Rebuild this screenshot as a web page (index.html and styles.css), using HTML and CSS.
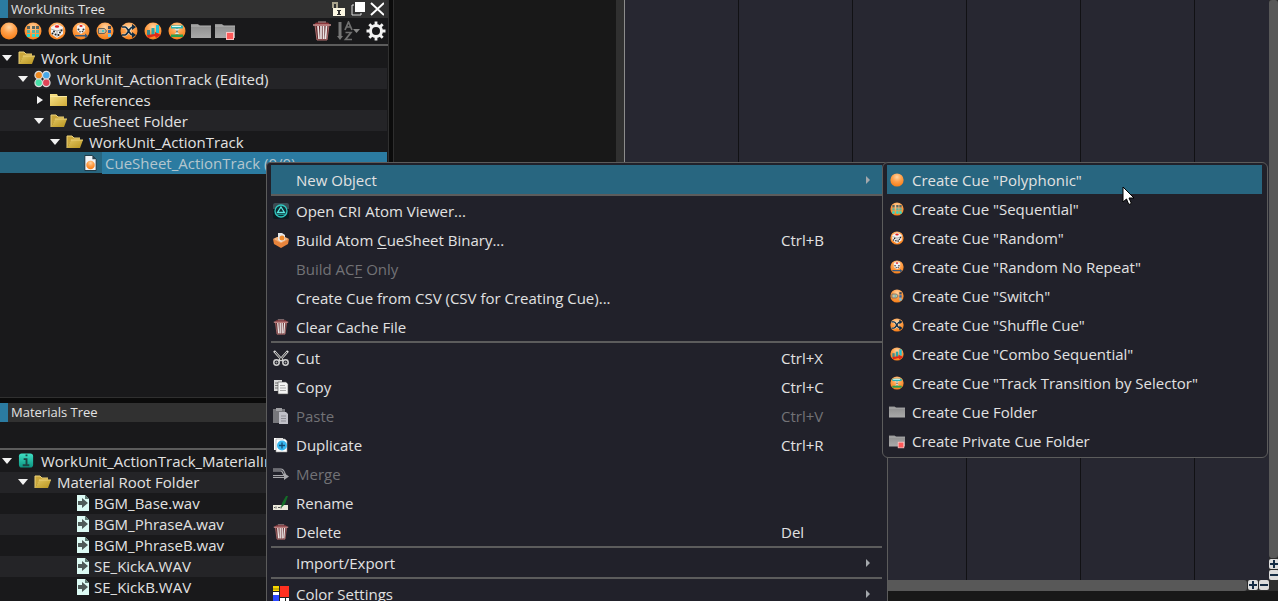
FILE: index.html
```html
<!DOCTYPE html>
<html lang="en">
<head>
    <meta charset="UTF-8">
    <meta name="viewport" content="width=device-width, initial-scale=1.0">
    <title>WorkUnits Tree</title>
    <link rel="stylesheet" href="styles.css">
</head>
<body>
    <!-- shared icons -->
    <svg class="sprite" aria-hidden="true">
        <defs>
            <radialGradient id="gOrange" cx="50%" cy="28%" r="70%">
                <stop offset="0" stop-color="#ffd5a4"/>
                <stop offset="0.5" stop-color="#ffa04a"/>
                <stop offset="1" stop-color="#f8801a"/>
            </radialGradient>
            <linearGradient id="gGray" x1="0" y1="0" x2="0" y2="1">
                <stop offset="0" stop-color="#8c8c8c"/>
                <stop offset="1" stop-color="#aaaaaa"/>
            </linearGradient>
            <linearGradient id="gFolder" x1="0" y1="0" x2="1" y2="1">
                <stop offset="0" stop-color="#fbe58c"/>
                <stop offset="1" stop-color="#d0ab38"/>
            </linearGradient>
            <linearGradient id="gOpen" x1="0" y1="0" x2="1" y2="1">
                <stop offset="0" stop-color="#e2c660"/>
                <stop offset="1" stop-color="#b8941f"/>
            </linearGradient>
            <linearGradient id="gTeal" x1="0" y1="0" x2="0" y2="1">
                <stop offset="0" stop-color="#3fe0c4"/>
                <stop offset="1" stop-color="#0b9480"/>
            </linearGradient>
        </defs>
        <symbol id="ball" viewBox="0 0 18 18"><circle cx="9" cy="9" r="8.5" fill="url(#gOrange)"/></symbol>
        <symbol id="seq" viewBox="0 0 18 18">
            <circle cx="9" cy="9" r="8.5" fill="url(#gOrange)"/>
            <path d="M3 4h3v3H3zM8 4h3v3H8zM12 4h3v3h-3z" fill="#5a6660"/>
            <path d="M3 8h3v3H3zM8 8h3v3H8zM12 8h3v3h-3z" fill="#58b4a4"/>
            <path d="M3 12h3v3H3zM8 12h3v3H8zM12 12h3v3h-3z" fill="#28dccc"/>
        </symbol>
        <symbol id="random" viewBox="0 0 18 18">
            <circle cx="9" cy="9" r="8.5" fill="url(#gOrange)"/>
            <path d="M3 5l6-3 6 3v7l-6 4-6-4z" fill="#f2f2f2"/>
            <path d="M3 7l6 2 6-2M9 9v6" stroke="#aaa" fill="none"/>
            <ellipse cx="9" cy="4.500" rx="2.2" ry="1.3" fill="#e02020"/>
            <g fill="#222"><circle cx="4.500" cy="11.500" r="1"/><circle cx="6" cy="9.500" r="1"/><circle cx="7.500" cy="12.500" r="1"/><circle cx="10.500" cy="13" r="1"/><circle cx="12" cy="10.500" r="1"/><circle cx="13.500" cy="8.500" r="1"/></g>
        </symbol>
        <symbol id="norepeat" viewBox="0 0 18 18">
            <circle cx="9" cy="9" r="8.5" fill="url(#gOrange)"/>
            <path d="M5 4l4-2 4 2v5l-4 3-4-3z" fill="#f2f2f2"/>
            <ellipse cx="9" cy="4" rx="1.6" ry="1" fill="#e02020"/>
            <g fill="#333"><circle cx="6.5" cy="7.500" r="1"/><circle cx="8" cy="9.800" r=".8"/><circle cx="11.5" cy="7.500" r="1"/><circle cx="10.500" cy="9.500" r=".8"/></g>
            <path d="M3 13h10v-1.500l3 2.500-3 2v-1.500H3z" fill="#365a80"/>
        </symbol>
        <symbol id="switch" viewBox="0 0 18 18">
            <circle cx="9" cy="9" r="8.5" fill="url(#gOrange)"/>
            <path d="M2.500 6.500h6l2 2.500-2 2.500h-6z" fill="#c8bea4" stroke="#6c6458"/>
            <path d="M6 8h2v2H6z" fill="#50c8c0"/>
            <path d="M12 4h3v3h-3z" fill="#444c58"/>
            <path d="M12 8h3v3h-3z" fill="#2c66b0"/>
            <path d="M12 12h3v3h-3z" fill="#68c4f0"/>
        </symbol>
        <symbol id="shuffle" viewBox="0 0 18 18">
            <circle cx="9" cy="9" r="8.5" fill="url(#gOrange)"/>
            <path d="M2 5h3c3 0 4 8 8 8M2 13h3c3 0 4-8 8-8" stroke="#dff3f8" stroke-width="3" fill="none" opacity=".6"/>
            <path d="M2 5h3c3 0 4 8 8 8M2 13h3c3 0 4-8 8-8" stroke="#102c44" stroke-width="1.7" fill="none"/>
            <path d="M12 2l4 3-4 3zM12 10l4 3-4 3z" fill="#102c44"/>
        </symbol>
        <symbol id="combo" viewBox="0 0 18 18">
            <circle cx="9" cy="9" r="8.5" fill="url(#gOrange)"/>
            <path d="M3 8h3v5H3z" fill="#3b8c90"/>
            <path d="M7.500 6h3v7h-3z" fill="#2ca6a6"/>
            <path d="M12 3h3v8h-3z" fill="#20c4d8"/>
            <path d="M3 13l8-1v-2l6 3-5 3-1-2-7 2z" fill="#e02818"/>
        </symbol>
        <symbol id="trans" viewBox="0 0 18 18">
            <circle cx="9" cy="9" r="8.5" fill="url(#gOrange)"/>
            <path d="M3 3.500h12v3H3z" fill="#28b4b4"/>
            <path d="M3 12.500h12v2.500H3z" fill="#28a050"/>
            <path d="M4 4.500h9" stroke="#d8fff8"/>
            <path d="M9 6.500v6" stroke="#4c7478" stroke-width="1.500"/>
            <path d="M6.500 7h5L9 9zM6.500 12h5L9 10z" fill="#d8ece8"/>
        </symbol>
        <symbol id="gfolder" viewBox="0 0 20 18">
            <path d="M0 2h7l2 2h11v12H0z" fill="url(#gGray)"/>
            <path d="M0 4h20" stroke="#b6b6b6"/>
        </symbol>
        <symbol id="pfolder" viewBox="0 0 20 18">
            <path d="M0 2h7l2 2h11v12H0z" fill="url(#gGray)"/>
            <path d="M0 4h20" stroke="#b6b6b6"/>
            <rect x="11.500" y="10.500" width="7" height="7" fill="#ff5a5a" stroke="#ffc4c4"/>
        </symbol>
        <symbol id="trash" viewBox="0 0 20 20">
            <path d="M3 4h14l-2 15H5z" fill="#642b2e" stroke="#b07070"/>
            <path d="M6 5l1 13M9 5v13M11.500 5v13M14.500 5l-1 13" stroke="#ece6e6" stroke-width="1.700"/>
            <path d="M4 1.500h12l2 2H2z" fill="#8c3438"/>
            <path d="M1 4h18" stroke="#c88c8c" stroke-width="1.500"/>
            <path d="M6 1h8" stroke="#c09a9a"/>
        </symbol>
        <symbol id="yopen" viewBox="0 0 17 14">
            <path d="M1 1h5l2 2h6v3H5L1 13z" fill="#c9a63c"/>
            <path d="M5 5h12l-3 8H1z" fill="url(#gOpen)"/>
            <path d="M1 13V1h5l2 2h6M5 5h12" stroke="#ecd27a" fill="none"/>
        </symbol>
        <symbol id="yclosed" viewBox="0 0 17 14">
            <path d="M0 1h7l1 2h9v10H0z" fill="url(#gFolder)"/>
            <path d="M0 3.500h17" stroke="#fbe9a0"/>
        </symbol>
        <symbol id="wav" viewBox="0 0 12 16">
            <path d="M0 0h8l4 4v12H0z" fill="#dcfaf4"/>
            <path d="M8 0v4h4z" fill="#5c7a72"/>
            <path d="M1 6h4V3l6 5-6 5v-3H1z" fill="#4f5a58"/>
        </symbol>
    </svg>

    <main class="app">
        <div class="dock">
            <section class="panel panel-work">
                <header class="titlebar">
                    <h2>WorkUnits Tree</h2>
                    <button aria-label="Unlock"><svg width="14" height="16" viewBox="0 0 14 16"><path d="M1 7V2h4v5" fill="none" stroke="#a8a28c" stroke-width="2"/><path d="M1 7h12v8H1z" fill="#fdf8e4"/><path d="M5 9h4v1H8v3h1v1H5v-1h1v-3H5z" fill="#333"/></svg></button>
                    <button aria-label="Float"><svg width="14" height="16" viewBox="0 0 14 16"><path d="M3 4H1v10h9v-2" fill="none" stroke="#ddd"/><path d="M4 1h10v10H4z" fill="#fff"/></svg></button>
                    <button aria-label="Close"><svg width="14" height="16" viewBox="0 0 14 16"><path d="M1 2l13 12M14 2L1 14" stroke="#fff" stroke-width="2"/></svg></button>
                </header>
                <div class="toolbar">
                    <button aria-label="Polyphonic"><svg class="ic18"><use href="#ball"/></svg></button>
                    <button aria-label="Sequential"><svg class="ic18"><use href="#seq"/></svg></button>
                    <button aria-label="Random"><svg class="ic18"><use href="#random"/></svg></button>
                    <button aria-label="Random No Repeat"><svg class="ic18"><use href="#norepeat"/></svg></button>
                    <button aria-label="Switch"><svg class="ic18"><use href="#switch"/></svg></button>
                    <button aria-label="Shuffle"><svg class="ic18"><use href="#shuffle"/></svg></button>
                    <button aria-label="Combo Sequential"><svg class="ic18"><use href="#combo"/></svg></button>
                    <button aria-label="Track Transition"><svg class="ic18"><use href="#trans"/></svg></button>
                    <button aria-label="Folder"><svg class="ic20"><use href="#gfolder"/></svg></button>
                    <button aria-label="Private Folder"><svg class="ic20"><use href="#pfolder"/></svg></button>
                    <button class="push" aria-label="Delete"><svg class="ic20"><use href="#trash"/></svg></button>
                    <button aria-label="Sort"><svg width="23" height="20" viewBox="0 0 23 20"><path d="M3 1v15" stroke="#777" stroke-width="3"/><path d="M0 15h6l-3 4z" fill="#777"/><path d="M8 9l3.500-8L15 9M9 6h5M8.500 11.500H14L8.500 18.500H15" fill="none" stroke="#707070" stroke-width="1.700"/><path d="M16 8h7l-3.500 4z" fill="#888"/></svg></button>
                    <button aria-label="Settings"><svg width="20" height="20" viewBox="0 0 20 20"><circle cx="10" cy="10" r="5.500" fill="none" stroke="#f2f2f2" stroke-width="3"/><path d="M10 0.500v4M10 15.500v4M0.500 10h4M15.500 10h4M3.300 3.300l2.800 2.800M13.900 13.900l2.800 2.800M3.300 16.700l2.800-2.800M13.900 6.100l2.800-2.800" stroke="#f2f2f2" stroke-width="2.800"/></svg></button>
                </div>
                <ul class="tree">
                    <li class="row d0"><span class="tw open"></span><svg class="fi"><use href="#yopen"/></svg>Work Unit</li>
                    <li class="row d1"><span class="tw open"></span><svg class="fi big" viewBox="0 0 18 18"><g stroke="#dcdcdc" stroke-width="1.300"><circle cx="5" cy="5" r="4" fill="#f08a20"/><circle cx="13" cy="5" r="4" fill="#48a8e8"/><circle cx="5" cy="13" r="4" fill="#48e0a8"/><circle cx="13" cy="13" r="4" fill="#e04458"/></g></svg>WorkUnit_ActionTrack (Edited)</li>
                    <li class="row d2"><span class="tw"></span><svg class="fi"><use href="#yclosed"/></svg>References</li>
                    <li class="row d2"><span class="tw open"></span><svg class="fi"><use href="#yopen"/></svg>CueSheet Folder</li>
                    <li class="row d3"><span class="tw open"></span><svg class="fi"><use href="#yopen"/></svg>WorkUnit_ActionTrack</li>
                    <li class="row selected"><svg class="fi big" viewBox="0 0 18 18"><path d="M3 1h8l4 4v12H3z" fill="#f0f4f8" stroke="#16303c"/><path d="M11 1v4h4z" fill="#2c4450"/><circle cx="9" cy="11" r="4.500" fill="url(#gOrange)"/></svg><span class="sel-text">CueSheet_ActionTrack (0/0)</span></li>
                </ul>
            </section>
            <section class="panel">
                <header class="titlebar lower"><h2>Materials Tree</h2></header>
                <div class="toolbar"></div>
                <ul class="tree">
                    <li class="row d0"><span class="tw open"></span><svg class="fi big" viewBox="0 0 18 18"><rect x="1" y="1" width="15" height="15" rx="3" fill="url(#gTeal)"/><path d="M8 3h2M6 7h3v6M5 13.500h7" stroke="#1c4444" stroke-width="2" fill="none"/></svg>WorkUnit_ActionTrack_MaterialInfo</li>
                    <li class="row d1"><span class="tw open"></span><svg class="fi"><use href="#yopen"/></svg>Material Root Folder</li>
                    <li class="row file"><svg class="wi"><use href="#wav"/></svg>BGM_Base.wav</li>
                    <li class="row file"><svg class="wi"><use href="#wav"/></svg>BGM_PhraseA.wav</li>
                    <li class="row file"><svg class="wi"><use href="#wav"/></svg>BGM_PhraseB.wav</li>
                    <li class="row file"><svg class="wi"><use href="#wav"/></svg>SE_KickA.WAV</li>
                    <li class="row file"><svg class="wi"><use href="#wav"/></svg>SE_KickB.WAV</li>
                </ul>
            </section>
        </div>
        <div class="tracks"></div>
        <div class="timeline">
            <div class="grid"></div>
            <div class="vbar">
                <div class="thumb"></div>
                <button class="zoom-btn" aria-label="Zoom in vertically"><svg width="10" height="10" viewBox="0 0 10 10"><path d="M1 5h8M5 1v8" stroke="#142c44" stroke-width="2"/></svg></button>
                <button class="zoom-btn" aria-label="Zoom out vertically"><svg width="10" height="10" viewBox="0 0 10 10"><path d="M1 5h8" stroke="#142c44" stroke-width="2"/></svg></button>
            </div>
            <div class="hbar">
                <div class="thumb"></div>
                <button class="zoom-btn" aria-label="Zoom in"><svg width="10" height="10" viewBox="0 0 10 10"><path d="M1 5h8M5 1v8" stroke="#142c44" stroke-width="2"/></svg></button>
                <button class="zoom-btn" aria-label="Zoom out"><svg width="10" height="10" viewBox="0 0 10 10"><path d="M1 5h8" stroke="#142c44" stroke-width="2"/></svg></button>
            </div>
            <div class="corner"></div>
        </div>
    </main>

    <ul class="menu context">
        <li class="has-sub">
            <button class="item active"><span></span><span>New Object</span><span></span><i class="arrow"></i></button>
            <ul class="menu submenu">
                <li><button class="item active"><svg class="mi"><use href="#ball"/></svg><span>Create Cue "Polyphonic"</span></button></li>
                <li><button class="item"><svg class="mi"><use href="#seq"/></svg><span>Create Cue "Sequential"</span></button></li>
                <li><button class="item"><svg class="mi"><use href="#random"/></svg><span>Create Cue "Random"</span></button></li>
                <li><button class="item"><svg class="mi"><use href="#norepeat"/></svg><span>Create Cue "Random No Repeat"</span></button></li>
                <li><button class="item"><svg class="mi"><use href="#switch"/></svg><span>Create Cue "Switch"</span></button></li>
                <li><button class="item"><svg class="mi"><use href="#shuffle"/></svg><span>Create Cue "Shuffle Cue"</span></button></li>
                <li><button class="item"><svg class="mi"><use href="#combo"/></svg><span>Create Cue "Combo Sequential"</span></button></li>
                <li><button class="item"><svg class="mi"><use href="#trans"/></svg><span>Create Cue "Track Transition by Selector"</span></button></li>
                <li><button class="item"><svg class="mi wide"><use href="#gfolder"/></svg><span>Create Cue Folder</span></button></li>
                <li><button class="item"><svg class="mi wide"><use href="#pfolder"/></svg><span>Create Private Cue Folder</span></button></li>
            </ul>
        </li>
        <li class="sep"></li>
        <li><button class="item"><svg class="mi wide" viewBox="0 0 16 16"><rect width="16" height="16" rx="2" fill="#0c1a20"/><path d="M0 2q0-2 2-2h12q2 0 2 2v4H0z" fill="#3c4c54"/><circle cx="8" cy="8" r="6" fill="#0c2a30" stroke="#30c8c0" stroke-width="1.300"/><path d="M8 4l3.500 5.500h-7z" fill="none" stroke="#58e8e0" stroke-width="1.300"/><path d="M4 11.500h8" stroke="#208c88"/></svg><span>Open CRI Atom Viewer...</span></button></li>
        <li><button class="item"><svg class="mi wide" viewBox="0 0 16 16"><path d="M0 7l8 3 8-3-1 5-7 4-7-4z" fill="#e8843c"/><path d="M0 7l4-2 8 0 4 2-8 4z" fill="#f8b47c"/><path d="M5 1h4l3 2v5l-4 2-3-2z" fill="#e8e8e8"/><circle cx="9" cy="6" r="2.500" fill="#f08a2c"/></svg><span>Build Atom <u>C</u>ueSheet Binary...</span><kbd>Ctrl+B</kbd></button></li>
        <li><button class="item" disabled><span></span><span>Build AC<u>F</u> Only</span></button></li>
        <li><button class="item"><span></span><span>Create Cue from CSV (CSV for Creating Cue)...</span></button></li>
        <li><button class="item"><svg class="mi wide"><use href="#trash"/></svg><span>Clear Cache File</span></button></li>
        <li class="sep"></li>
        <li><button class="item"><svg class="mi wide" viewBox="0 0 16 16"><path d="M1 1l9 10M15 1L6 11" stroke="#d8d8d8" stroke-width="2.500"/><path d="M2 2l7 8M14 2l-7 8" stroke="#333"/><g fill="none" stroke="#d0d0d0" stroke-width="1.500"><circle cx="3.500" cy="12.500" r="2.700"/><circle cx="12.500" cy="12.500" r="2.700"/></g><g fill="#aaa"><circle cx="3.500" cy="12.500" r="1"/><circle cx="12.500" cy="12.500" r="1"/></g></svg><span>Cut</span><kbd>Ctrl+X</kbd></button></li>
        <li><button class="item"><svg class="mi wide" viewBox="0 0 16 16"><path d="M1 1h8v11H1z" fill="#d8d8d8"/><path d="M2 4h3M2 6.500h3M2 9h3" stroke="#777"/><path d="M5 3h8l2 2v10H5z" fill="#f4f4f4" stroke="#555" stroke-width=".6"/><path d="M7 6.500h5M7 9h6M7 11.500h6" stroke="#aaa"/></svg><span>Copy</span><kbd>Ctrl+C</kbd></button></li>
        <li><button class="item" disabled><svg class="mi wide" viewBox="0 0 16 16"><path d="M0 1h12v14H0z" fill="#77777c"/><path d="M3 0h6v3H3z" fill="#a0a0a4"/><path d="M6 4h7l2 2v10H6z" fill="#c0c0c8"/><path d="M8 8h5M8 10.500h5M8 13h5" stroke="#8c8c94"/></svg><span>Paste</span><kbd>Ctrl+V</kbd></button></li>
        <li><button class="item"><svg class="mi wide" viewBox="0 0 16 16"><path d="M1 1h9v12H1z" fill="#fff"/><path d="M3 2h9l2 2v11H3z" fill="#fff" stroke="#999" stroke-width=".6"/><circle cx="9" cy="8.500" r="5" fill="#38b8f0"/><path d="M9 5.500v6M6 8.500h6" stroke="#144c74" stroke-width="1.300"/></svg><span>Duplicate</span><kbd>Ctrl+R</kbd></button></li>
        <li><button class="item" disabled><svg class="mi wide" viewBox="0 0 16 16"><path d="M0 4h8c3 0 3 6 5 6M0 10.500h12" stroke="#a8a8ac" stroke-width="3" fill="none"/><path d="M0 4h8c3 0 3 6 5 6M0 10.500h12" stroke="#33333b" fill="none"/><path d="M11 7l5 3.500-5 3.500z" fill="#a8a8ac"/></svg><span>Merge</span></button></li>
        <li><button class="item"><svg class="mi wide" viewBox="0 0 16 16"><path d="M0 10h15v5H0z" fill="#eceadb"/><path d="M1 12.500h1M3 11.500v2M5 12.500h2M8 11.500v2" stroke="#555"/><path d="M8 13l1-5 4-7h2l-3 8z" fill="#146c28"/></svg><span>Rename</span></button></li>
        <li><button class="item"><svg class="mi wide"><use href="#trash"/></svg><span>Delete</span><kbd>Del</kbd></button></li>
        <li class="sep"></li>
        <li><button class="item"><span></span><span>Import/Export</span><span></span><i class="arrow"></i></button></li>
        <li class="sep"></li>
        <li><button class="item"><svg class="mi wide" viewBox="0 0 16 16"><path d="M0 0h16v16H0z" fill="#222"/><path d="M0 0h6v5H0z" fill="#f8d800"/><path d="M0 3h6" stroke="#a08800"/><path d="M7 0h9v11H7z" fill="#ff3020"/><path d="M0 6h6v3H0z" fill="#fff"/><path d="M0 9h6v7H0z" fill="#2c48ff"/><path d="M7 12h5v4H7zM13 12h3v4h-3z" fill="#fff"/></svg><span>Color Settings</span><span></span><i class="arrow"></i></button></li>
    </ul>

    <svg class="cursor" width="13" height="20" viewBox="0 0 13 20"><path d="M1 1v15l3.500-3 2.300 5.500 2.600-1.100L7 12h5z" fill="#fff" stroke="#000"/></svg>
</body>
</html>
```
FILE: styles.css
```css
* {
    box-sizing: border-box;
}
body {
    margin: 0;
    height: 100vh;
    overflow: hidden;
    background: #181818;
    color: #e2e2e2;
    font-family: "Open Sans", "Noto Sans", sans-serif;
    font-size: 15px;
    position: relative;
}
ul {
    list-style: none;
    margin: 0;
    padding: 0;
}
button {
    font: inherit;
    color: inherit;
    background: none;
    border: 0;
    padding: 0;
}
svg {
    display: block;
    flex: none;
}
.sprite {
    position: absolute;
    width: 0;
    height: 0;
}
.app {
    display: flex;
    height: 100%;
}

/* left dock */
.dock {
    flex: none;
    width: 394px;
    display: flex;
    flex-direction: column;
    background: #0b0b0b;
    border-right: 1px solid #2e2e2e;
    padding-right: 4px;
    gap: 5px;
}
.panel {
    flex: 1;
    background: #19191b;
    border-right: 1px solid #303030;
    overflow: hidden;
}
.panel-work {
    flex: 2;
    border-bottom: 1px solid #303030;
}
.titlebar {
    display: flex;
    align-items: center;
    gap: 5px;
    height: 18px;
    padding-right: 4px;
    border-left: 8px solid #2b7ba1;
    background: #313131;
}
.titlebar.lower {
    height: 19px;
}
.titlebar h2 {
    flex: 1;
    margin: 0;
    padding-left: 3px;
    font-size: 13px;
    font-weight: normal;
    line-height: 19px;
}
.toolbar {
    display: flex;
    align-items: center;
    gap: 6px;
    height: 28px;
    padding-right: 2px;
    border-bottom: 2px solid #5c5c5c;
}
.toolbar .ic20 {
    margin: 0 -1px;
}
.push {
    margin-left: auto;
}
.ic18 {
    width: 18px;
    height: 18px;
}
.ic20 {
    width: 20px;
    height: 20px;
}
.tree {
    padding: 1px 1px 0 0;
}
.row {
    display: flex;
    align-items: center;
    height: 21px;
    line-height: 22px;
    white-space: nowrap;
}
.row:nth-child(even) {
    background: #242427;
}
.d0 { padding-left: 2px; }
.d1 { padding-left: 18px; }
.d2 { padding-left: 34px; }
.d3 { padding-left: 50px; }
.file { padding-left: 77px; }
.tw {
    flex: none;
    width: 16px;
}
.tw::before {
    content: "";
    display: block;
    width: 0;
    margin-left: 3px;
    border: 4px solid transparent;
    border-left: 6px solid #f2f2f2;
    border-right: 0;
}
.tw.open::before {
    margin-left: 0;
    border: 5px solid transparent;
    border-top: 6px solid #f2f2f2;
    border-bottom: 0;
}
.fi {
    width: 17px;
    height: 14px;
    margin-right: 6px;
}
.fi.big {
    height: 18px;
}
.wi {
    width: 12px;
    height: 16px;
    margin-right: 5px;
}
.row.selected {
    padding-left: 82px;
    background: #286680;
    color: #b4c6ce;
}
.selected .fi {
    margin-right: 3px;
}
.sel-text {
    flex: 1;
    padding-left: 3px;
    background: #2b7ba1;
}

/* track list and timeline */
.tracks {
    flex: none;
    width: 230px;
    border-right: 8px solid #303030;
}
.timeline {
    flex: 1;
    display: grid;
    grid-template-columns: 1fr 9px;
    grid-template-rows: 1fr 11px;
    padding-bottom: 10px;
    border-left: 1px solid #8c8c8c;
}
.grid {
    background: repeating-linear-gradient(to right, #272731 0, #272731 113px, #111114 113px, #111114 114px);
}
.vbar {
    display: flex;
    flex-direction: column;
    gap: 1px;
    background: #2b2b2b;
    overflow: hidden;
}
.hbar {
    display: flex;
    gap: 1px;
    background: #2b2b2b;
}
.thumb {
    flex: 1;
    background: #585858;
    border-radius: 3px;
}
.corner {
    background: #2e2e2e;
}
.zoom-btn {
    width: 10px;
    height: 10px;
    background: #dcdcdc;
    border-radius: 2px;
}

/* menus */
.menu {
    position: absolute;
    padding: 2px 5px 2px 4px;
    background: #21212a;
    border: 1px solid #5c5c5c;
    border-radius: 4px;
}
.context {
    left: 266px;
    top: 162px;
    width: 622px;
}
.has-sub {
    position: relative;
}
.submenu {
    left: 100%;
    top: -3px;
    width: 386px;
    border-radius: 6px;
}
.item {
    display: grid;
    grid-template-columns: 25px 1fr 85px 16px;
    align-items: center;
    width: 100%;
    height: 29px;
    line-height: 30px;
    text-align: left;
    white-space: nowrap;
}
.submenu .item {
    grid-template-columns: 25px 1fr;
}
.item.active {
    background: #286680;
}
.item:disabled {
    color: #727276;
}
.item kbd {
    font: inherit;
}
.item u {
    text-underline-offset: 2px;
}
.mi {
    width: 14px;
    height: 14px;
    margin-left: 3px;
}
.mi.wide {
    width: 16px;
    height: 16px;
    margin-left: 2px;
}
.arrow {
    width: 0;
    border: 4px solid transparent;
    border-left: 4px solid #a4a8ac;
    border-right: 0;
}
.sep {
    height: 2px;
    background: #5c5c5c;
}
.cursor {
    position: absolute;
    left: 1122px;
    top: 186px;
}
```
